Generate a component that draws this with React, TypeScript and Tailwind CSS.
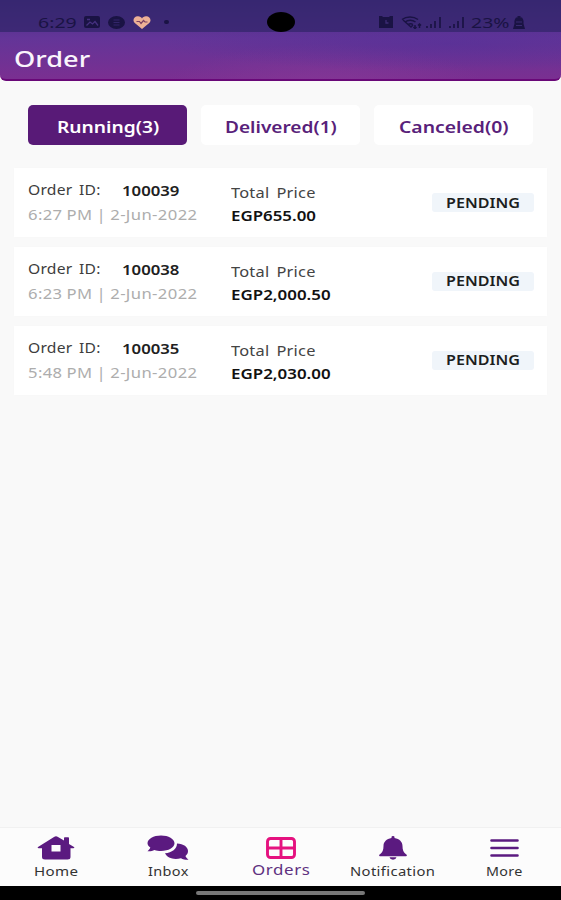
import { useLayoutEffect, useRef, useState } from "react";
import type { ReactNode } from "react";
import clsx from "clsx";

type Tab = { label: string; textWidth: number };
type Order = { id: string; placed: string; price: string; priceWidth: number };

const tabs: Tab[] = [
  { label: "Running(3)", textWidth: 102 },
  { label: "Delivered(1)", textWidth: 112 },
  { label: "Canceled(0)", textWidth: 110 },
];

const orders: Order[] = [
  { id: "100039", placed: "6:27 PM | 2-Jun-2022", price: "EGP655.00", priceWidth: 85 },
  { id: "100038", placed: "6:23 PM | 2-Jun-2022", price: "EGP2,000.50", priceWidth: 99 },
  { id: "100035", placed: "5:48 PM | 2-Jun-2022", price: "EGP2,030.00", priceWidth: 99 },
];

/** single line of text stretched sideways to fill `width` */
function WideText({
  width,
  className = "",
  children,
}: {
  width: number;
  className?: string;
  children: ReactNode;
}) {
  const ref = useRef<HTMLSpanElement>(null);
  const [scale, setScale] = useState(1);

  useLayoutEffect(() => {
    if (ref.current) setScale(width / ref.current.offsetWidth);
  }, [width, children]);

  return (
    <span className={clsx("block shrink-0 text-left whitespace-nowrap", className)} style={{ width }}>
      <span ref={ref} className="inline-block origin-left align-top" style={{ transform: `scaleX(${scale})` }}>
        {children}
      </span>
    </span>
  );
}

function SignalIcon() {
  return (
    <svg viewBox="0 0 17 13" className="h-[13px] w-[17px]" stroke="currentColor" strokeWidth="1.7">
      <path d="M2 12v-2M6 12V8M10 12V5M15 12V1" />
    </svg>
  );
}

function StatusBar() {
  return (
    <div className="relative flex h-8 items-center bg-[#33266b]/75 pt-3 pr-[36px] pl-[38px] text-[#1a1344]">
      <WideText width={39} className="text-[15px] leading-5">6:29</WideText>
      <svg viewBox="0 0 16 12" className="ml-[7px] h-3 w-4">
        <rect width="16" height="12" rx="2" fill="currentColor" />
        <path d="M2.5 9.5 6 6l2.5 2L11 5.500l3 4M3 3.500h3" fill="none" stroke="#453080" strokeWidth="1.300" />
      </svg>
      <svg viewBox="0 0 17 13" className="ml-[8px] h-[13px] w-[17px]">
        <ellipse cx="8.500" cy="6.500" rx="8.500" ry="6.500" fill="currentColor" />
        <path d="M5.500 4h6M5.500 6.500h6M5.500 9h6" stroke="#32256a" />
      </svg>
      <svg viewBox="0 0 18 13" className="ml-[8px] h-[13px] w-[18px]">
        <path d="M9 13 1.500 6.800C-1 4 1.500 0 5 .3 7 .4 8.300 1.300 9 2.500 9.700 1.300 11 .4 13 .3c3.500-.3 6 3.700 3.500 6.500z" fill="#edb096" />
        <path d="M3.500 5.500h3l1.500 2 2.500-3 1.500 1.500h2.500" fill="none" stroke="#7c4061" strokeWidth="1.200" />
      </svg>
      <span className="ml-[13px] h-[4px] w-[5px] rounded-full bg-current" />
      <span className="absolute top-[12px] left-[267px] h-5 w-7 rounded-[50%] bg-black" />
      <div className="ml-auto flex items-center">
        <svg viewBox="0 0 14 12" className="h-3 w-[14px]">
          <path d="M0 0h3l1 1h6l1-1h3v12H0z" fill="currentColor" />
          <path d="M7 4v3h2.500" fill="none" stroke="#3c2c74" strokeWidth="1.300" />
        </svg>
        <svg viewBox="0 0 21 13" className="ml-[8px] h-[13px] w-[21px]" fill="none" stroke="currentColor" strokeWidth="1.500">
          <path d="M1 3.500c4.500-3.300 11.500-3.300 16 0M4 6c3-2.200 7.500-2.200 10.500 0M7 8.500c1.500-1 3.500-1 5 0" />
          <path d="M2 4l8 7 2-2M14 9v3M12.500 11l1.500 1.500L15.500 11M18.500 12V8M17 9.500 18.500 8 20 9.500" />
        </svg>
        <div className="ml-[3px] flex gap-[6px]">
          <SignalIcon />
          <SignalIcon />
        </div>
        <WideText width={39} className="ml-[6px] text-[15px] leading-5">23%</WideText>
        <svg viewBox="0 0 12 13" className="ml-[3px] h-[13px] w-3">
          <path d="M4.500 0h3v1.500H9c1 1.500 2 3 1.500 6L12 13H0l1.500-5.500C1 4.500 2 3 3 1.500h1.500z" fill="currentColor" />
          <path d="M3 6h6M3 9.500h6" stroke="#382a70" />
        </svg>
      </div>
    </div>
  );
}

function OrderCard({ order }: { order: Order }) {
  return (
    <div className="flex h-[69px] bg-white pr-[13px] pl-[14px] shadow-[0_0_3px_rgba(0,0,0,0.015)]">
      <div className="w-[203px] pt-[12px]">
        <div className="flex">
          <WideText width={73} className="text-[13.500px] leading-5 tracking-[0.2px] [word-spacing:2px] text-[#3d3d3d]">
            Order ID:
          </WideText>
          <WideText width={57} className="ml-[21px] pt-px text-[13.500px] leading-5 font-semibold text-[#202020]">
            {order.id}
          </WideText>
        </div>
        <WideText
          width={169}
          className="mt-[4px] text-[13.500px] leading-5 tracking-[0.3px] [word-spacing:-0.500px] text-[#adadad]"
        >
          {order.placed}
        </WideText>
      </div>
      <div className="pt-[15px]">
        <WideText width={85} className="text-[13.500px] leading-5 tracking-[0.2px] [word-spacing:2px] text-[#444]">
          Total Price
        </WideText>
        <WideText width={order.priceWidth} className="mt-[3px] text-[13.500px] leading-5 font-semibold text-[#111]">
          {order.price}
        </WideText>
      </div>
      <div className="mt-[25px] ml-auto flex h-[19px] w-[102px] items-center justify-center rounded-[3px] bg-[#f0f5fa]">
        <WideText width={74} className="text-[13.500px] leading-5 font-semibold text-[#1c1e20]">
          PENDING
        </WideText>
      </div>
    </div>
  );
}

function NavItem({
  label,
  width,
  active = false,
  children,
}: {
  label: string;
  width: number;
  active?: boolean;
  children: ReactNode;
}) {
  return (
    <div className="flex flex-1 flex-col items-center text-[#5b1a80]">
      <div className="flex h-[39px] items-center justify-center">{children}</div>
      <WideText
        width={width}
        className={clsx(
          "leading-5",
          active ? "-mt-[7px] text-[14px] tracking-[0.5px] text-[#5f3180]" : "-mt-[5px] text-[12px] tracking-[0.3px] text-[#333]",
        )}
      >
        {label}
      </WideText>
    </div>
  );
}

function BottomNav() {
  return (
    <nav className="flex h-[59px] border-t border-[#f1f1f1] bg-[#fcfcfc]">
      <NavItem label="Home" width={44}>
        <svg viewBox="0 0 38 24" className="h-6 w-[38px]" fill="currentColor">
          <path
            fillRule="evenodd"
            d="M17 1q2-1.500 4 0l6 3.500V2q0-.8.800-.8h3.400q.8 0 .8.800v6l5 3q1 .9-.5 1.200H33.500V21q0 2.500-3 2.500H8q-3 0-3-2.500v-8.800H1.500Q0 11.900 1 11zM14.500 9v6.500h9V9z"
          />
        </svg>
      </NavItem>
      <NavItem label="Inbox" width={41}>
        <svg viewBox="0 0 42 25" className="h-[25px] w-[42px]" fill="currentColor">
          <path d="M14 .5c7.500 0 13.500 3.400 13.500 7.800S21.500 16 14 16c-2.500 0-4.500-.3-6.500-1-2 1-4 1.500-7 1.300C2 15 3 13.800 3.300 12.600 1.500 11.300.5 9.800.5 8.300.5 3.900 6.500.5 14 .5z" />
          <path d="M30 8.500c6.500.3 11 3.500 11 7.500 0 2-.8 3.500-2.500 5 .3 1.200 1.500 2.500 3 3.700-3 .1-5.500-.4-7.500-1.500-7 2-13.500 0-16-4.900 7-.7 12-4.300 12-9.800z" />
        </svg>
      </NavItem>
      <NavItem label="Orders" width={58} active>
        <svg viewBox="0 0 30 22" className="h-[22px] w-[30px] text-[#e5127f]" fill="none" stroke="currentColor" strokeWidth="2.900">
          <rect x="1.500" y="1.500" width="27" height="19" rx="3" />
          <path d="M15 1.500v19M1.500 11h27" />
        </svg>
      </NavItem>
      <NavItem label="Notification" width={85}>
        <svg viewBox="0 0 28 24" className="h-6 w-7" fill="currentColor">
          <path d="M12.500 2V1q0-1 1.500-1t1.500 1v1c5 1 8 3.800 8 8 0 4.300 1 6.500 3.500 8.200 1.500 1 1 2-.5 2h-25c-1.500 0-2-1-.5-2 2.500-1.700 3.500-3.900 3.500-8.200 0-4.200 3-7 8-8zM10.500 21.300h7Q17 23.700 14 23.700t-3.500-2.400z" />
        </svg>
      </NavItem>
      <NavItem label="More" width={37}>
        <svg viewBox="0 0 29 18" className="h-[18px] w-[29px]" stroke="currentColor" strokeWidth="2.600" strokeLinecap="round">
          <path d="M1.500 1.500h26M1.500 9h26M1.500 16.500h26" />
        </svg>
      </NavItem>
    </nav>
  );
}

export default function App() {
  return (
    <div className="flex h-[900px] w-[561px] flex-col overflow-hidden bg-[#f9f9f9] font-['Noto_Sans','Open_Sans',sans-serif]">
      <header className="h-[81px] overflow-hidden rounded-b-[6px] border-b-2 border-[#690878] bg-[radial-gradient(ellipse_at_80%_55%,#54309799,transparent_45%),radial-gradient(ellipse_at_58%_110%,#8d3c9988,transparent_35%),linear-gradient(180deg,#452e83_0%,#633598_48%,#7a2f91_100%)]">
        <StatusBar />
        <WideText width={76} className="mt-[11px] ml-[14px] text-[22.500px] leading-8 font-medium text-[#faf5fc]">
          Order
        </WideText>
      </header>

      <main className="flex-1 px-[14px] pt-6">
        <div className="flex gap-[14px] px-[14px]">
          {tabs.map((tab, i) => (
            <button
              key={tab.label}
              className={clsx(
                "flex h-10 flex-1 items-center justify-center rounded-[5px] pt-[3px] text-base font-semibold",
                i === 0 ? "bg-[#581a77] text-white" : "bg-white text-[#58217a]",
              )}
            >
              <WideText width={tab.textWidth} className="leading-6">{tab.label}</WideText>
            </button>
          ))}
        </div>
        <div className="mt-[23px] flex flex-col gap-[9.750px]">
          {orders.map((order) => (
            <OrderCard key={order.id} order={order} />
          ))}
        </div>
      </main>

      <BottomNav />
      <div className="flex h-[14px] justify-center bg-black pt-[5px]">
        <div className="h-1 w-[169px] rounded-full bg-[#777]" />
      </div>
    </div>
  );
}
